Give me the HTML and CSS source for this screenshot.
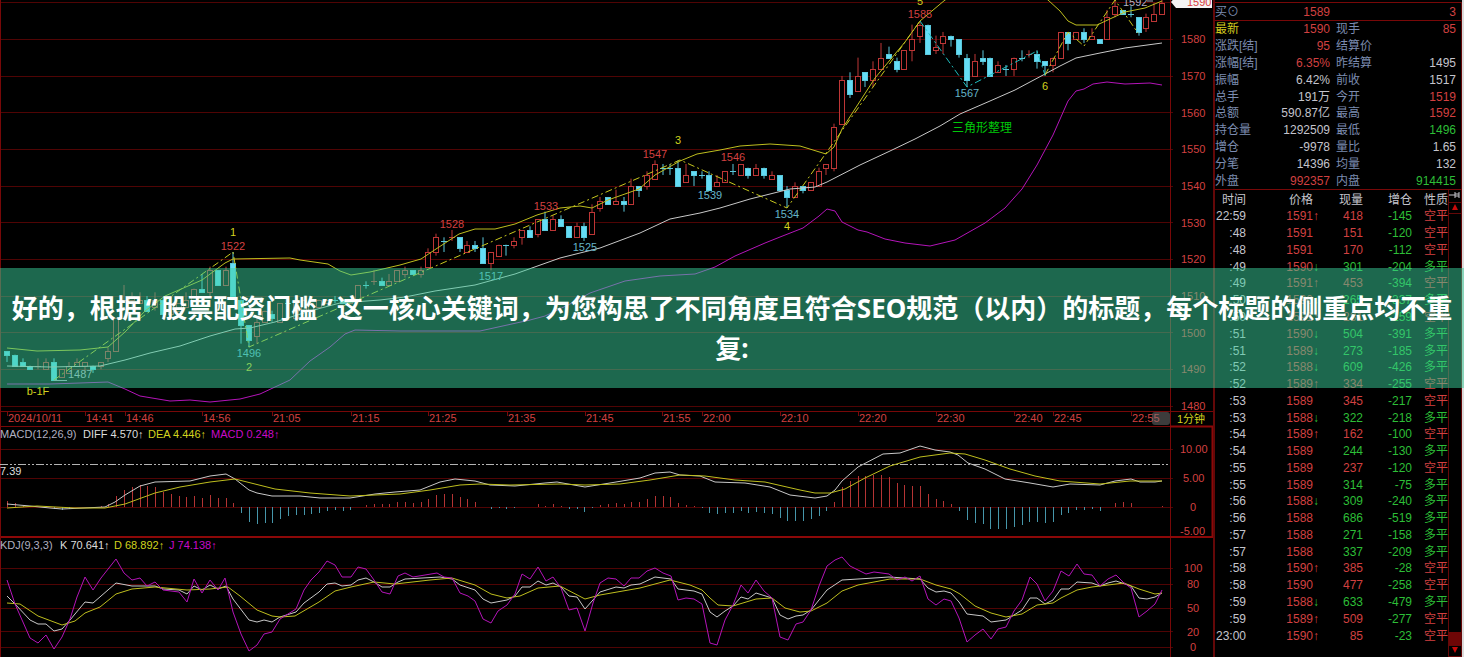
FILE: index.html
```html
<!DOCTYPE html>
<html lang="zh-CN">
<head>
  <meta charset="UTF-8" />
  <meta name="viewport" content="width=device-width, initial-scale=1.0"/>
  <title>股票配资门槛</title>
  <link rel="stylesheet" href="styles.css">
</head>
<body>
  <main class="terminal">
    <svg class="chart" viewBox="0 0 1213 657" role="img" aria-label="1分钟K线图">
      <g id="grid" class="grid"></g>

      <!-- frame -->
      <path class="frame" d="M0 411.5H1213M0 426.5H1170M1170.5 0V657"/>
      <path class="frame strong" d="M1170 426.5H1212.5V537M0 537H1213"/>
      <path class="frame" d="M.5 0V657"/>
      <path id="ticks" class="frame"/>

      <g id="candles"></g>
      <g id="bars"></g>
      <path class="level" d="M0 464.5H1170"/>
      <g id="lines" class="lines"></g>

      <g class="red">
        <text x="1181" y="43">1580</text>
        <text x="1181" y="80">1570</text>
        <text x="1181" y="117">1560</text>
        <text x="1181" y="153">1550</text>
        <text x="1181" y="190">1540</text>
        <text x="1181" y="227">1530</text>
        <text x="1181" y="263">1520</text>
        <text x="1181" y="300">1510</text>
        <text x="1181" y="337">1500</text>
        <text x="1181" y="373">1490</text>
        <text x="1181" y="410">1480</text>
        <text x="1180" y="453">10.00</text>
        <text x="1183" y="482">5.00</text>
        <text x="1190" y="511">0</text>
        <text x="1180" y="535">-5.00</text>
        <text x="1184" y="572">100</text>
        <text x="1187" y="588">80</text>
        <text x="1187" y="612">50</text>
        <text x="1187" y="636">20</text>
        <text x="1190" y="651">0</text>
      </g>
      <path class="tag" d="M1171 2L1176 -4H1212V8H1176Z"/>
      <text class="tag-text" x="1187" y="6">1590</text>
      <text class="yellow" x="1177" y="423">1分钟</text>

      <g id="times" class="red"></g>
      <rect class="handle" x="1152" y="412" width="18" height="13" rx="3"/>

      <g class="mid red">
        <text x="233" y="250">1522</text>
        <text x="452" y="228">1528</text>
        <text x="546" y="210">1533</text>
        <text x="655" y="158">1547</text>
        <text x="733" y="161">1546</text>
        <text x="920" y="18">1585</text>
      </g>
      <g class="mid cyan">
        <text x="249" y="357">1496</text>
        <text x="491" y="280">1517</text>
        <text x="585" y="251">1525</text>
        <text x="710" y="199">1539</text>
        <text x="787" y="218">1534</text>
        <text x="967" y="97">1567</text>
      </g>
      <g class="mid yellow">
        <text x="233" y="236">1</text>
        <text x="249" y="371">2</text>
        <text x="678" y="144">3</text>
        <text x="787" y="230">4</text>
        <text x="920" y="5">5</text>
        <text x="1045" y="90">6</text>
        <text x="38" y="395">b-1F</text>
      </g>
      <path class="pointer" d="M54 380.5H67M1147 1H1153"/>
      <text class="pale" x="68" y="378">1487</text>
      <text class="pale" x="1123" y="6">1592</text>
      <text class="green wide" x="952" y="132">三角形整理</text>

      <text class="pale" x="0" y="438">MACD(12,26,9)</text>
      <text class="white" x="83" y="438">DIFF 4.570↑</text>
      <text class="yellow" x="148" y="438">DEA 4.446↑</text>
      <text class="magenta" x="211" y="438">MACD 0.248↑</text>
      <text class="white" x="0" y="475">7.39</text>
      <text class="pale" x="0" y="549">KDJ(9,3,3)</text>
      <text class="white" x="60" y="549">K 70.641↑</text>
      <text class="yellow" x="114" y="549">D 68.892↑</text>
      <text class="magenta" x="169" y="549">J 74.138↑</text>
    </svg>

    <aside class="panel">
      <table class="quote first">
        <tbody>
          <tr><th>买⊙</th><td class="red">1589</td><th></th><td class="red">3</td></tr>
        </tbody>
      </table>
      <table class="quote">
        <tbody>
          <tr><th class="yellow">最新</th><td class="red">1590</td><th>现手</th><td class="red">85</td></tr>
          <tr><th>涨跌[结]</th><td class="red">95</td><th>结算价</th><td></td></tr>
          <tr><th>涨幅[结]</th><td class="red">6.35%</td><th>昨结算</th><td>1495</td></tr>
          <tr><th>振幅</th><td>6.42%</td><th>前收</th><td>1517</td></tr>
          <tr><th>总手</th><td>191万</td><th>今开</th><td class="red">1519</td></tr>
          <tr><th>总额</th><td>590.87亿</td><th>最高</th><td class="red">1592</td></tr>
          <tr><th>持仓量</th><td>1292509</td><th>最低</th><td class="green">1496</td></tr>
          <tr><th>增仓</th><td>-9978</td><th>量比</th><td>1.65</td></tr>
          <tr><th>分笔</th><td>14396</td><th>均量</th><td>132</td></tr>
          <tr><th>外盘</th><td class="red">992357</td><th>内盘</th><td class="green">914415</td></tr>
        </tbody>
      </table>
      <div class="deals">
        <table class="trades">
          <thead>
            <tr><th class="t">时间</th><th class="p">价格</th><th class="v">现量</th><th class="c">增仓</th><th class="k">性质</th></tr>
          </thead>
          <tbody id="trades"></tbody>
        </table>
        <div class="scroll">
          <svg class="pin" viewBox="0 0 12 10"><path d="M0 5H6M6 2V8M6 4H10M6 6H10M10 2V8"/></svg>
          <button class="up" aria-label="向上"><svg viewBox="0 0 8 8"><path d="M4 1L7 7H1Z"/></svg></button>
          <span class="thumb"></span>
          <button class="down" aria-label="向下"><svg viewBox="0 0 8 8"><path d="M4 7L7 1H1Z"/></svg></button>
        </div>
      </div>
    </aside>

    <h1 class="banner">好的，根据<span class="mark">“</span>股票配资门槛<span class="mark">”</span>这一核心关键词，为您构思了不同角度且符合SEO规范（以内）的标题，每个标题的侧重点均不重复:</h1>
  </main>
  <script src="script.js"></script>
</body>
</html>
```
FILE: styles.css
```css
* {
  box-sizing: border-box;
}
body {
  margin: 0;
  background: #000;
  color: #c4c4cc;
  font-family: "Liberation Sans", "Noto Sans CJK SC", sans-serif;
  font-size: 12px;
  overflow-x: hidden;
}
.terminal {
  position: relative;
  display: grid;
  grid-template-columns: minmax(0, 1fr) 251px;
}
.chart {
  display: block;
  width: 100%;
  height: auto;
  font-size: 11px;
}

/* colours */
.red { color: #d24040; fill: #d24040; }
.green { color: #2dbe37; fill: #2dbe37; }
.yellow { color: #d2d21e; fill: #d2d21e; }
.cyan { fill: #64b4c8; }
.magenta { fill: #c80ac8; }
.pale { fill: #b0b0c0; }
.white { fill: #dcdcdc; }

/* chart */
.chart text { white-space: pre; }
.chart .wide { font-size: 12px; fill: #00c80a; }
.mid { text-anchor: middle; }
.grid { stroke: #500404; stroke-width: 1; }
.frame { stroke: #780808; fill: none; }
.frame.strong { stroke: #8c0808; stroke-width: 2; }
.level { stroke: #b4b4b4; stroke-dasharray: 8 2 2 2 2 2; }
.pointer { stroke: #a8a8b8; }
.tag { fill: #f4f4f4; }
.tag-text { fill: #d83c3c; }
.handle { fill: #777; fill-opacity: .5; }
.up-candle { stroke: #be3636; fill: #000; }
.down-candle { stroke: #5ac8dc; fill: #64dcf5; }
.up-bar { stroke: #b43434; }
.down-bar { stroke: #4696aa; }
.lines polyline { fill: none; stroke-width: 1; }
.l-white { stroke: #c8c8c8; }
.l-yellow { stroke: #bebe1e; }
.l-magenta { stroke: #b414b9; }
.l-zig { stroke: #c8c81e; stroke-dasharray: 7 3 2 3; }
.l-zigc { stroke: #1ebebe; stroke-dasharray: 7 3 2 3; }

/* side panel */
.panel {
  display: flex;
  flex-direction: column;
  border-left: 2px solid #640808;
  border-right: 2px solid #dcdcdc;
  padding-top: 2px;
}
table {
  border-collapse: collapse;
  table-layout: fixed;
}
th, td {
  padding: 0;
  font-weight: normal;
  line-height: 16px;
  white-space: nowrap;
}
.quote {
  width: 100%;
  height: 169px;
  border-top: 1px solid #780808;
  border-right: 1px solid #640808;
}
.quote.first {
  height: 18px;
}
.quote th {
  text-align: left;
  color: #7c8cb0;
}
.quote th.yellow { color: #d2c81e; }
.quote td { text-align: right; }
.quote tr > :nth-child(1) { width: 48px; }
.quote tr > :nth-child(2) { width: 67px; }
.quote tr > :nth-child(3) { width: 48px; padding-left: 6px; }
.quote tr > :nth-child(4) { padding-right: 5px; }
.deals {
  display: flex;
  flex: 1;
  border-top: 1px solid #780808;
}
.trades {
  width: 233px;
  margin-top: 2px;
  margin-bottom: 13px;
  text-align: right;
}
.t { width: 31px; }
.p { width: 74px; padding-right: 7px; }
.v { width: 43px; }
.c { width: 49px; }
.trades td.p { padding-right: 0; }
.arrow {
  display: inline-block;
  width: 7px;
  text-align: left;
}
.scroll {
  display: flex;
  flex-direction: column;
  align-items: center;
  flex: 1;
  border-left: 1px solid #640808;
  border-right: 1px solid #640808;
}
.pin {
  width: 12px;
  height: 10px;
  stroke: #c4c4cc;
  margin-bottom: 2px;
}
.scroll button {
  width: 100%;
  height: 12px;
  padding: 0;
  border: 0;
  border-top: 1px solid #640808;
  border-bottom: 1px solid #640808;
  background: #000;
  display: flex;
  justify-content: center;
}
.scroll button svg {
  width: 8px;
  height: 8px;
  fill: #c80a0a;
}
.thumb {
  width: 100%;
  height: 13px;
  margin-top: auto;
  background: #6e0606;
}

/* title strip over the terminal */
.banner {
  position: absolute;
  top: 268px;
  left: 0;
  right: 0;
  margin: 0;
  padding: 20px 8px;
  background: rgba(58, 208, 156, .5);
  color: #fff;
  font-family: "Noto Sans", "Noto Sans CJK SC", sans-serif;
  font-size: 26px;
  font-weight: bold;
  line-height: 40px;
  text-align: center;
}
.mark {
  padding: 0 4px;
}
```
FILE: script.js
```js
const STEP = 7.804;
const X0 = 7;
const xAt = i => X0 + i * STEP;
const yAt = p => 406 - (p - 1480) * 3.667;

// open, close, high, low for each minute
const candles = `1495,1494,1495,1492 1494,1491 1492,1491,1493,1491 1491,1490 1491,1491,1493,1490 1490,1492,1493,1490
1492,1487,1493,1487 1488,1490 1489,1491,1492,1489 1491,1492,1493,1491 1491,1492,1492,1489 1491,1490,1491,1489 1491,1492,1492,1490
1493,1495,1496,1492 1495,1504 1504,1509,1513,1504 1509,1510,1511,1507 1508,1509,1511,1508 1509,1506,1510,1506 1507,1509,1511,1506
1509,1505 1505,1508 1506,1508 1507,1509,1511,1507 1509,1512 1512,1511,1516,1511 1511,1517,1518,1510 1517,1513
1513,1517,1518,1513 1519,1510,1522,1510 1509,1502,1509,1497 1502,1498,1502,1496 1499,1503,1504,1497 1503,1506 1505,1504,1506,1503 1503,1508
1508,1508,1509,1507,c 1504,1509 1506,1509 1506,1508 1507,1509 1508,1509 1509,1509,1510,1508,c 1509,1508 1508,1509 1509,1513
1513,1513,1514,1512,c 1514,1514,1517,1513 1514,1513,1515,1513 1513,1514,1516,1513 1514,1517 1516,1517,1518,1515 1517,1516 1516,1517,1518,1515
1518,1522,1523,1518 1522,1526,1527,1521 1525,1525,1526,1522,c 1526,1526,1528,1525 1526,1523,1526,1522 1522,1524,1525,1522 1524,1523,1525,1522
1523,1519,1526,1519 1519,1522,1522,1517 1521,1524 1524,1524,1524,1521,c 1524,1525,1526,1523 1526,1528,1528,1524 1528,1526,1529,1526
1527,1531,1531,1526 1531,1528,1533,1528 1528,1531,1532,1528 1531,1529,1532,1529 1529,1526 1526,1529,1530,1526 1529,1526,1530,1525
1527,1533,1535,1527 1534,1536,1537,1533 1537,1535 1535,1536,1539,1535 1536,1535,1537,1533 1535,1540,1542,1535 1540,1539,1540,1537
1540,1543,1544,1539 1542,1546,1547,1542 1545,1545,1546,1543,c 1545,1545,1546,1543,c 1545,1540,1547,1540 1541,1543,1546,1541
1544,1543,1544,1540 1543,1543,1544,1542,c 1543,1539,1544,1539 1540,1541,1543,1540 1541,1544 1544,1544,1546,1543,c 1543,1546
1545,1543,1545,1542 1543,1545,1546,1543 1545,1543,1545,1542 1542,1543,1544,1542 1543,1539 1539,1537,1540,1534 1537,1540,1541,1537
1540,1539,1540,1538 1539,1541 1540,1544,1545,1540 1545,1546,1546,1543 1545,1556,1557,1544 1557,1569,1570,1557 1569,1565,1571,1564
1566,1570,1575,1566 1571,1569,1571,1567 1569,1572,1574,1567 1572,1575,1579,1572 1576,1575,1578,1575 1574,1572,1575,1571 1572,1577
1577,1580,1584,1574 1581,1584,1585,1579 1584,1576 1577,1578,1581,1576 1579,1581,1582,1576 1581,1580,1581,1578 1580,1576,1580,1575
1575,1569,1576,1567 1570,1574,1576,1570 1575,1574,1577,1573 1575,1570 1571,1573,1574,1571 1572,1572,1573,1570,c 1572,1575,1575,1570
1575,1575,1577,1574,c 1576,1576,1577,1575 1576,1574,1577,1572 1574,1573,1574,1570 1573,1575,1575,1571 1575,1582 1582,1579,1582,1577
1580,1582 1582,1580,1583,1579 1580,1581,1583,1580 1580,1579 1580,1586,1588,1580 1587,1589,1592,1586 1588,1587 1587,1587,1589,1586,c
1586,1582,1586,1581 1583,1586,1587,1582 1585,1587,1590,1585 1587,1590,1591,1587`;

// MACD histogram, height in px from the zero line
const bars = [6,4,1,0,0,0,-2,-3,-2,0,0,0,1,3,11,17,20,22,21,20,15,13,11,10,11,9,12,9,9,4,-6,-15,-17,-16,-16,-12,-9,-8,-8,-7,-6,
  -4,-3,-4,-3,0,2,3,3,3,5,5,4,5,8,12,13,13,10,8,5,0,-2,-1,-2,-1,0,0,3,1,3,1,-2,-2,-5,-1,2,3,4,3,5,5,8,11,11,10,4,2,1,-1,-6,
  -7,-6,-6,-4,-6,-5,-6,-7,-11,-14,-14,-14,-12,-9,-4,5,20,26,31,31,32,32,30,24,22,21,21,13,8,6,3,-4,-13,-16,-17,-22,-22,-22,
  -20,-18,-15,-15,-16,-15,-8,-6,-3,-3,-2,-4,0,4,5,4,0,0,0,1];

const lines = [
  ["l-yellow", "7,348 37,351 80,350 108,347 125,332 145,311 165,296 202,280 225,263 233,259 290,258 300,260 328,264 340,271 351,275 370,272 400,265 421,259 436,249 459,234 475,229 495,229 515,224 537,215 560,208 580,206 592,208 608,200 639,189 655,175 680,161 697,154 720,150 740,146 770,144 800,146 826,154 834,147 842,129 875,78 905,42 920,21 945,0 980,-20 1020,-20 1048,0 1060,11 1068,21 1076,25 1097,25 1112,18 1125,12 1145,8 1162,1"],
  ["l-white", "7,366 50,367 100,366 125,360 150,353 180,346 210,336 235,329 250,328 275,322 310,311 340,303 380,300 405,297 435,291 475,285 515,274 560,258 600,248 640,233 670,219 700,213 720,208 750,199 790,189 815,187 827,182 860,165 890,151 915,139 940,126 960,114 990,101 1015,90 1045,74 1060,66 1076,58 1100,53 1125,48 1162,43"],
  ["l-magenta", "7,384 50,384 80,383 108,382 125,389 140,396 170,401 190,400 210,402 240,399 260,394 290,380 310,361 330,347 345,334 355,330 400,331 480,331 530,320 545,316 570,304 590,293 625,281 660,276 695,274 715,267 735,256 765,243 780,237 803,228 819,216 827,209 835,211 842,222 858,230 867,232 885,239 905,243 930,246 955,240 985,223 1005,208 1022,189 1037,165 1053,135 1068,101 1076,91 1084,89 1093,84 1107,82 1125,84 1150,83 1162,85"],
  ["l-zig", "54,380 233,252 249,347 680,160 787,208 920,21"],
  ["l-zigc", "920,21 967,87 1037,51 1045,75"],
  ["l-zig", "1045,75 1068,32 1084,46 1115,0 1138,33"],
  // MACD
  ["l-white", "7,504 30,506 50,508 62,509 105,507 115,502 125,495 140,486 155,482 190,481 210,476 226,474 235,479 249,490 257,493 272,496 300,496 320,498 350,498 375,494 395,492 420,490 440,482 455,479 475,481 490,485 515,486 545,483 557,482 585,487 610,483 640,478 655,473 670,472 680,475 700,476 715,482 745,483 770,487 790,495 815,498 827,496 835,490 842,481 858,467 883,454 900,453 920,446 935,450 950,452 958,455 968,463 985,469 1005,479 1030,483 1053,487 1070,484 1100,485 1115,481 1131,479 1140,482 1155,482 1162,481"],
  ["l-yellow", "7,508 37,506 75,508 105,508 125,504 155,493 180,487 210,482 235,479 255,484 275,489 310,493 350,496 400,494 430,490 460,485 480,484 510,485 560,484 585,485 620,484 650,480 680,475 705,476 735,480 765,482 800,490 815,493 830,493 845,489 865,478 890,466 920,457 950,453 965,454 985,460 1010,469 1035,476 1060,481 1100,484 1130,481 1162,481"],
  // KDJ
  ["l-white", "7,596 15,604 30,620 38,624 46,624 54,631 62,629 70,620 85,602 93,603 116,583 132,586 155,586 163,589 179,590 187,594 194,586 202,590 210,585 218,589 226,586 233,599 249,620 257,622 264,620 272,622 280,617 296,612 304,603 319,592 327,584 335,583 342,586 351,585 358,580 366,578 374,582 382,587 390,587 398,582 405,579 440,577 452,579 460,585 475,590 483,599 491,603 507,600 515,596 522,587 530,587 538,581 546,585 553,583 561,587 569,596 577,597 585,609 600,592 616,587 624,588 631,585 640,584 655,577 671,579 678,589 694,591 702,594 710,612 717,617 725,611 733,606 741,597 748,599 756,593 772,598 780,615 788,619 796,616 803,615 811,610 827,590 842,580 874,578 889,577 920,579 928,588 936,592 944,591 951,593 959,602 967,614 983,616 991,622 1006,620 1022,610 1030,598 1037,598 1045,604 1053,600 1061,589 1069,589 1077,582 1092,583 1100,586 1108,583 1116,581 1131,586 1139,598 1147,599 1155,597 1162,593"],
  ["l-yellow", "7,603 20,604 38,616 62,625 75,621 85,613 100,607 116,594 132,589 155,587 187,590 210,589 228,587 240,596 257,610 272,616 280,617 295,616 319,602 335,591 351,587 374,582 395,584 430,580 452,578 475,585 491,594 507,598 520,596 538,588 560,586 585,599 600,595 640,588 670,580 690,585 702,590 710,598 718,605 733,606 756,599 772,598 785,608 800,612 811,611 827,603 842,591 858,585 890,579 920,579 936,585 951,589 960,594 975,606 991,613 1006,617 1022,614 1037,605 1053,603 1061,598 1077,590 1092,587 1100,586 1124,583 1139,589 1155,594 1162,593"],
  ["l-magenta", "7,580 15,604 30,638 38,643 46,635 54,649 62,637 70,619 77,597 85,577 93,590 101,578 116,559 124,573 132,580 140,578 147,586 155,582 163,590 179,592 187,602 194,579 202,593 210,580 218,590 225,578 233,612 241,634 249,651 257,645 264,634 272,632 280,619 296,609 304,590 311,580 319,572 327,561 335,565 342,577 351,577 358,567 366,569 374,580 382,592 390,594 398,576 405,573 413,577 437,573 444,577 452,578 460,593 468,596 475,601 483,619 491,623 498,611 507,605 515,594 522,574 530,579 538,567 546,581 553,577 561,588 569,610 577,608 585,631 593,603 600,583 608,578 616,579 624,586 631,578 639,578 647,571 655,568 663,573 671,576 678,600 686,598 694,599 702,604 710,643 717,645 725,620 733,605 741,585 748,593 756,580 764,591 772,598 780,637 788,640 796,624 803,622 811,610 819,586 827,566 835,560 842,557 850,566 866,574 874,572 889,574 897,580 905,577 912,581 920,576 928,599 936,605 944,599 951,601 959,618 967,642 975,635 983,629 991,639 998,629 1006,627 1014,611 1022,600 1030,577 1037,584 1045,601 1053,591 1061,571 1069,576 1077,564 1084,574 1092,575 1100,586 1108,579 1116,575 1124,583 1131,588 1139,617 1147,611 1155,604 1162,590"]
];

const times = [[7, "2024/10/11"], [85, "14:41"], [125, "14:46"], [202, "14:56"], [272, "21:05"], [351, "21:15"], [428, "21:25"],
  [507, "21:35"], [585, "21:45"], [662, "21:55"], [702, "22:00"], [780, "22:10"], [858, "22:20"], [936, "22:30"],
  [1014, "22:40"], [1053, "22:45"], [1131, "22:55"]];

// time, price, volume, volume colour, change, type
const trades = `22:59 1591↑ 418 r -145 空平
:48 1591 151 r -120 空平
:48 1591 170 r -112 空平
:49 1590↓ 301 g -204 多平
:49 1591↑ 453 r -394 空平
:50 1590↓ 265 g -337 多平
:50 1591↑ 281 r -159 空平
:51 1590↓ 504 g -391 多平
:51 1589↓ 273 g -185 多平
:52 1588↓ 609 g -426 多平
:52 1589↑ 334 r -255 空平
:53 1589 345 r -217 空平
:53 1588↓ 322 g -218 多平
:54 1589↑ 162 r -100 空平
:54 1589 244 g -130 多平
:55 1589 237 r -120 空平
:55 1589 314 g -75 多平
:56 1588↓ 309 g -240 多平
:56 1588 686 g -519 多平
:57 1588 271 g -158 多平
:57 1588 337 g -209 多平
:58 1590↑ 385 r -28 空平
:58 1590 477 r -258 空平
:59 1588↓ 633 g -479 多平
:59 1589↑ 509 r -277 空平
23:00 1590↑ 85 r -23 空平`;

const gridY = [2, 39, 76, 112, 149, 186, 222, 259, 296, 332, 369, 406, 449, 478, 507, 568, 584, 608, 631, 647];
document.getElementById("grid").innerHTML = gridY.map(y => `<path d="M0 ${y + 0.5}H1173"/>`).join("");

document.getElementById("candles").innerHTML = candles.split(/\s+/).map((c, i) => {
  const [open, close, high = Math.max(open, close), low = Math.min(open, close), mark] = c.split(",");
  const down = +close < +open || mark === "c";
  const x = Math.round(xAt(i));
  const top = Math.round(yAt(Math.max(open, close))) + 0.5;
  const bottom = Math.round(yAt(Math.min(open, close))) + 0.5;
  const body = open === close
    ? `<path d="M${x - 3} ${top}H${x + 3}"/>`
    : `<rect x="${x - 2.5}" y="${top}" width="5" height="${bottom - top}"/>`;
  return `<g class="${down ? "down-candle" : "up-candle"}"><path d="M${x} ${yAt(high)}V${yAt(low)}"/>${body}</g>`;
}).join("");

document.getElementById("bars").innerHTML = bars.map((h, i) => h === 0 ? "" :
  `<path class="${h > 0 ? "up-bar" : "down-bar"}" d="M${Math.round(xAt(i)) + 0.5} 507V${507 - h}"/>`).join("");

document.getElementById("lines").innerHTML = lines.map(([cls, pts]) => `<polyline class="${cls}" points="${pts}"/>`).join("");

document.getElementById("ticks").setAttribute("d", times.map(([x]) => `M${x + 0.5} 411V416`).join(""));
document.getElementById("times").innerHTML = times.map(([x, t]) => `<text x="${x + 1}" y="422">${t}</text>`).join("");

document.getElementById("trades").innerHTML = trades.split("\n").map(line => {
  const [time, price, vol, side, change, type] = line.split(" ");
  const arrow = price.slice(4);
  const color = side === "r" ? "red" : "green";
  return `<tr>
    <td>${time}</td>
    <td class="p red">${price.slice(0, 4)}<span class="arrow ${arrow === "↓" ? "green" : "red"}">${arrow}</span></td>
    <td class="${color}">${vol}</td>
    <td class="green">${change}</td>
    <td class="${color}">${type}</td>
  </tr>`;
}).join("");
```
